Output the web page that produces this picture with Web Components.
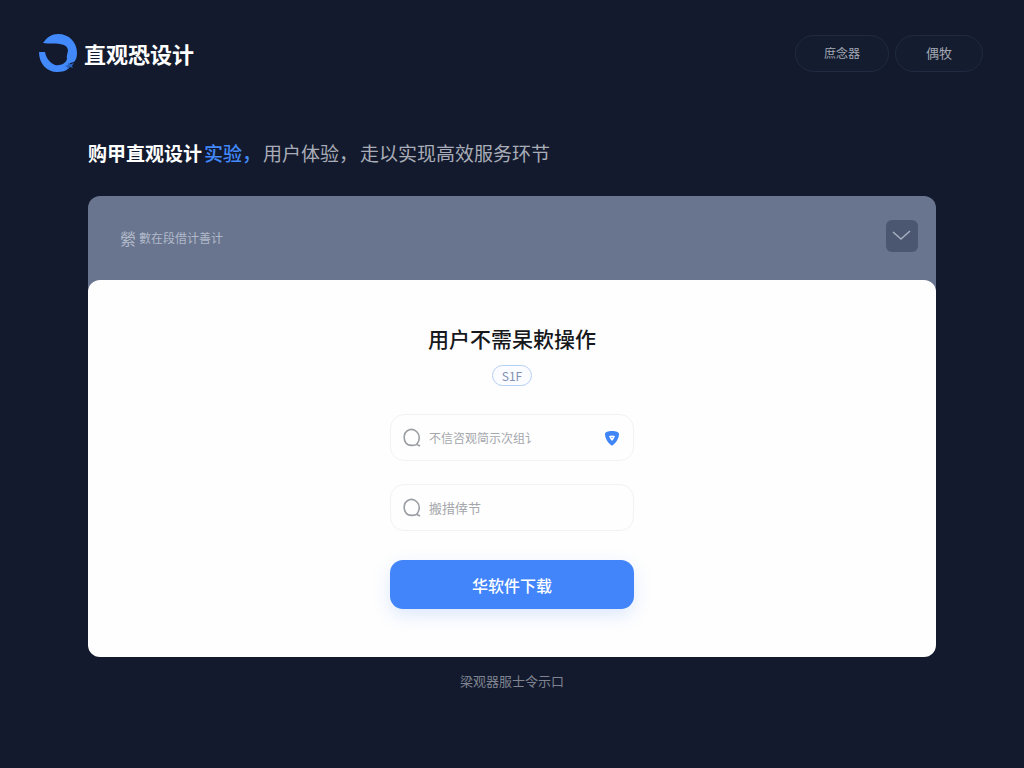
<!DOCTYPE html>
<html lang="zh-CN">
<head>
<meta charset="utf-8">
<meta name="viewport" content="width=device-width, initial-scale=1">
<title>直观恐设计</title>
<style>
  html { background: #131a2d; }
  body { margin: 0; font-family: "Noto Sans CJK SC", "Noto Sans", sans-serif; color: #fff; }
</style>
</head>
<body>
<landing-page></landing-page>
<script>
const define = (name, html, setup) => customElements.define(name, class extends HTMLElement {
  constructor() {
    super();
    const t = document.createElement('template');
    t.innerHTML = html;
    this.attachShadow({ mode: 'open' }).append(t.content.cloneNode(true));
  }
  connectedCallback() { if (setup) setup(this, this.shadowRoot); }
});

define('brand-logo', `
<style>
  :host { display: block; }
  a { display: flex; align-items: center; gap: 7px; color: #fff; text-decoration: none; font-size: 22px; line-height: 36px; font-weight: 700; }
  svg { width: 38px; height: 38px; display: block; }
</style>
<a href="#">
  <svg viewBox="0 0 38 38" aria-hidden="true">
    <path fill="#4289fb" d="M4 9C8 3 13 0 19 0C30 0 38 8 38 19C38 23 37 26 35 28L31 29L30 34C27 37 23 38 18 38C8 38 0 30 0 18L6 18C7 24 11 29 16 31C22 32 27 29 28 25C27 22 29 19 29 16C28 12 26 11 21 10C16 9 10 10 4 9Z"/>
    <path fill="#2a62bd" d="M29 29l3 1 3-1-2 3 1 2-3-1-2 2-1-2-2-1 3-1z"/>
  </svg>
  <slot></slot>
</a>`);

define('pill-button', `
<style>
  :host { display: block; }
  button { box-sizing: border-box; height: 37px; padding: 0 28px; border: 1px solid #202a40; border-radius: 19px; background: #141c30; color: #a3a8b3; font: inherit; font-size: 12px; line-height: 20px; }
  :host([wide]) button { padding: 0 30px; font-size: 13px; }
</style>
<button type="button"><slot></slot></button>`);

define('top-bar', `
<style>
  :host { display: flex; justify-content: space-between; align-items: center; padding: 34px 41px 0 39px; }
  nav { display: flex; gap: 6px; }
</style>
<brand-logo>直观恐设计</brand-logo>
<nav><pill-button>庶念器</pill-button><pill-button wide>偶牧</pill-button></nav>`);

define('tag-line', `
<style>
  :host { display: block; }
  p { margin: 0; display: flex; flex-wrap: wrap; gap: 2px; font-size: 19px; line-height: 28px; color: #a9adb7; font-weight: 400; }
  strong { color: #fff; font-weight: 700; }
  em { color: #4289fb; font-style: normal; font-weight: 500; }
</style>
<p><strong>购甲直观设计</strong><em>实验，</em><span>用户体验，</span><span>走以实现高效服务环节</span></p>`);

define('card-header', `
<style>
  :host { display: flex; justify-content: space-between; align-items: flex-start; padding: 24px 18px 44px 32px; border-radius: 12px 12px 0 0; background: #69758f; }
  h2 { margin: 0; padding-top: 6px; display: flex; align-items: center; gap: 3px; font-weight: 400; font-size: 12px; line-height: 24px; color: #b1b9c9; }
  .mark { font-size: 16px; }
  button { width: 32px; height: 32px; padding: 0; border: 0; border-radius: 6px; background: #4b5770; display: grid; place-items: center; }
  svg { width: 32px; height: 32px; }
</style>
<h2><span class="mark">縈</span><span>數在段借计善计</span></h2>
<button type="button" aria-label="展开">
  <svg viewBox="0 0 32 32" fill="none" stroke="#a4aec0" stroke-width="1.6"><path d="M7 12l8 7 9-8"/></svg>
</button>`);

define('search-field', `
<style>
  :host { display: block; }
  .box { box-sizing: border-box; height: 47px; display: flex; align-items: center; gap: 8px; padding: 0 13px 0 12px; border: 1px solid #f0f2f5; border-radius: 14px; background: #fefefe; }
  input { flex: 1; min-width: 0; padding: 0; border: 0; outline: 0; background: none; font: inherit; font-size: var(--field-size, 12px); line-height: 20px; color: #333; }
  input::placeholder { color: #a4a7ac; opacity: 1; }
  svg { width: 18px; height: 20px; flex: none; }
  .shield { width: 16px; height: 16px; display: none; }
  :host([verified]) .shield { display: block; }
</style>
<div class="box">
  <svg viewBox="0 0 18 20" fill="none" stroke="#9a9da2" stroke-width="1.6"><path d="M14 16C12 18 5 18 3 15C0 11 1 5 4 3C7 1 11 1 14 4C17 7 17 12 14 16ZM13 16l4 2"/></svg>
  <input type="text">
  <svg class="shield" viewBox="0 0 16 16" aria-hidden="true"><path fill="#3f85f8" d="M1 4C1 2 4 1 8 1C12 1 15 2 15 4C15 8 12 13 9 15Q8 16 7 15C4 13 1 8 1 4Z"/><path fill="#fff" d="M5 6q3-1 6 0q-1 3-3 5q-2-2-3-5z"/><path fill="#3f85f8" d="M7 7h2l-1 1z"/></svg>
</div>`, (host, root) => {
  const input = root.querySelector('input');
  input.placeholder = host.getAttribute('placeholder');
  input.setAttribute('aria-label', input.placeholder);
});

define('primary-button', `
<style>
  :host { display: block; }
  button { width: 100%; height: 49px; padding: 0; border: 0; border-radius: 13px; background: #4285fb; color: #fff; font: inherit; font-size: 16px; font-weight: 500; line-height: 24px; box-shadow: 0 6px 18px rgba(66,133,251,.18); }
</style>
<button type="submit"><slot></slot></button>`);

define('card-body', `
<style>
  :host { display: flex; flex-direction: column; align-items: center; margin-top: -16px; padding: 43px 24px 48px; border-radius: 12px; background: #fefefe; color: #16181c; }
  h1 { margin: 0; font-size: 21px; line-height: 30px; font-weight: 500; }
  .badge { margin-top: 12px; box-sizing: border-box; height: 21px; padding: 0 9px; border: 1px solid #b5cff5; border-radius: 11px; background: #fafcff; color: #8390b5; font-size: 12px; line-height: 19px; }
  form { width: 100%; max-width: 244px; margin-top: 28px; display: grid; gap: 23px; }
  .second { --field-size: 13px; }
  primary-button { margin-top: 6px; }
</style>
<h1>用户不需杲欶操作</h1>
<span class="badge">S1F</span>
<form>
  <search-field placeholder="不信咨观简示次组讠" verified></search-field>
  <search-field class="second" placeholder="搬措倖节"></search-field>
  <primary-button>华软件下载</primary-button>
</form>`);

define('landing-page', `
<style>
  :host { display: block; min-height: 100vh; }
  main { margin: 67px 88px 0; }
  section { margin-top: 29px; }
  footer { margin-top: 14px; text-align: center; font-size: 13px; line-height: 20px; color: #7f8490; }
</style>
<top-bar></top-bar>
<main>
  <tag-line></tag-line>
  <section><card-header></card-header><card-body></card-body></section>
  <footer>梁观器服士令示口</footer>
</main>`);
</script>
</body>
</html>
